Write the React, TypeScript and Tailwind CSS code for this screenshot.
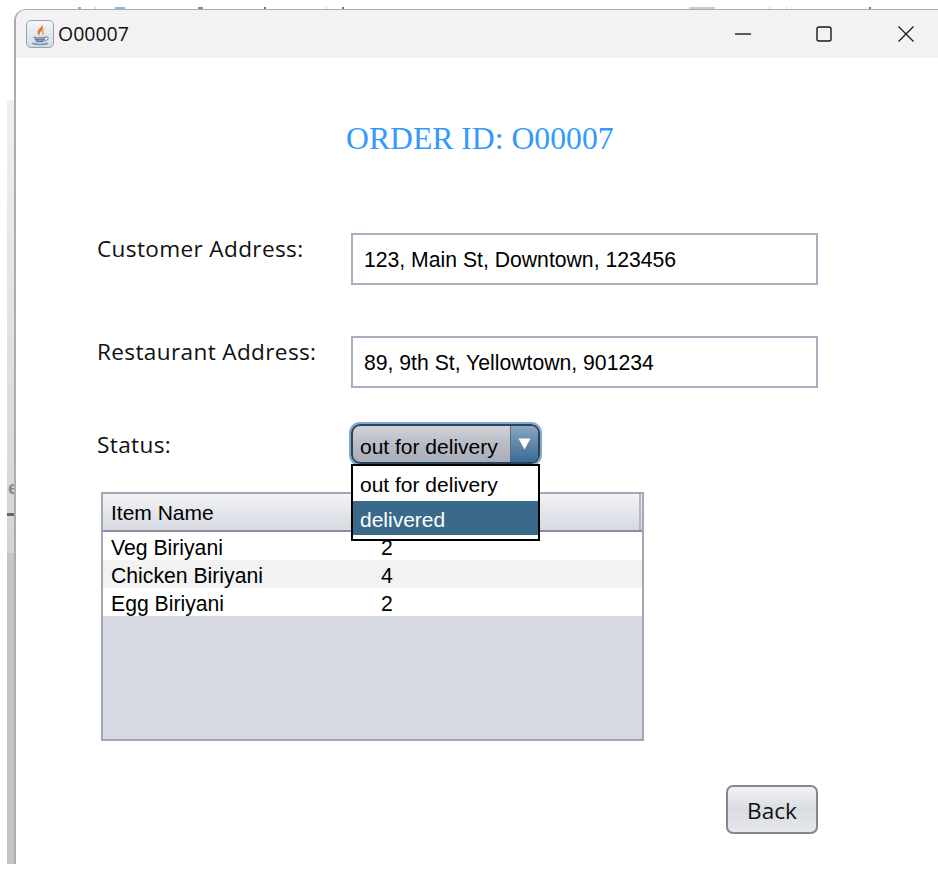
const sans = "font-['Liberation_Sans',Arial,sans-serif]";
const ui = "font-['Open_Sans','Noto_Sans',sans-serif]";

function JavaIcon() {
  return (
    <div className="w-[28px] h-[28px] rounded-[5px] border border-[#8fa6b8] bg-gradient-to-b from-[#f4f6f8] to-[#d3dbe2]">
      <svg width="26" height="26" viewBox="0 0 26 26" fill="none">
        <path d="M15 3c1 3-4.500 4.500-4.500 8.500 0 1.500 1 2.500 2 3.500-.6-2.200 .5-3.500 2-5 1.500-1.600 2-4 .5-7z" fill="#e8762d" />
        <path d="M18 7c-2.200 1.300-3.500 3-3 5 .2 1 1 1.600 .8 2.800 1.400-1 1-2.400 .7-3.300-.4-1.600 .4-3 1.500-4.500z" fill="#eb9a45" />
        <path d="M6.500 16c3.500 1 9 1 12.500 0M7.500 18c3 .7 7.500 .7 10.500 0M8.500 20c2.500 .6 6 .6 8.500 0" stroke="#5f7f9c" strokeWidth="1.300" />
        <path d="M18.500 16c3-.6 4 1.800 1 3.300l-2 .7" stroke="#5f7f9c" strokeWidth="1" />
        <path d="M5 22.300c4.500 1.600 12 1.600 16 0" stroke="#7d96ab" strokeWidth="1.500" />
      </svg>
    </div>
  );
}

function TitleBar() {
  return (
    <div className="h-[48px] bg-[#f3f1f3] flex items-center rounded-tl-[10px] shrink-0">
      <div className="ml-[10px]"><JavaIcon /></div>
      <span className={`ml-[4px] text-[19.500px] text-[#111] ${ui}`}>O00007</span>
      <div className="ml-auto flex items-center text-[#1a1a1a] pb-[1px]">
        <svg width="18" height="18" viewBox="0 0 18 18" className="mr-[63px]"><path d="M1 9h16" stroke="currentColor" strokeWidth="1.400" /></svg>
        <svg width="18" height="18" viewBox="0 0 18 18" className="mr-[64px]"><rect x="2" y="2" width="14" height="14" rx="2" fill="none" stroke="currentColor" strokeWidth="1.400" /></svg>
        <svg width="18" height="18" viewBox="0 0 18 18" className="mr-[23px]"><path d="M1.500 1.500l15 15M16.500 1.500l-15 15" stroke="currentColor" strokeWidth="1.300" /></svg>
      </div>
    </div>
  );
}

function Field({ label, value, className }: { label: string; value: string; className: string }) {
  return (
    <div className={`flex items-start ${className}`}>
      <span className={`w-[254px] text-[22.600px] leading-[32px] tracking-[0.35px] text-[#111] ${ui}`}>{label}</span>
      <div className={`w-[467px] h-[52px] border-2 border-[#a9adbd] flex items-center pl-[11px] pt-[2px] text-[21.200px] text-black ${sans}`}>{value}</div>
    </div>
  );
}

function Combo() {
  return (
    <div className="relative w-[189px] h-[40px] rounded-[9px] border-2 border-[#2c4257] shadow-[0_0_0_2px_#7fa9d2] bg-gradient-to-b from-[#d0d3d9] via-[#b9bcc5] to-[#a9adb8] flex items-center">
      <span className={`pl-[7px] pt-[5px] flex-1 text-[21px] text-black ${sans}`}>out for delivery</span>
      <div className="w-[28px] h-full rounded-r-[7px] bg-gradient-to-b from-[#8aa6c2] to-[#386a94] flex items-center justify-center border-l border-[#5b6a78]">
        <svg width="13" height="12" viewBox="0 0 13 12"><path d="M0.500 0.500h12L6.500 11.500z" fill="#fff" /></svg>
      </div>
      <div className={`absolute left-[-2px] top-[38px] w-[189px] h-[77px] border-2 border-black bg-white z-10 text-[21px] ${sans}`}>
        <div className="h-[35px] pl-[7px] pt-[3px] flex items-center text-black">out for delivery</div>
        <div className="h-[34px] pl-[7px] pt-[3px] flex items-center text-white bg-[#3a6a8a]">delivered</div>
      </div>
    </div>
  );
}

function Row({ name, qty, alt }: { name: string; qty: string; alt?: boolean }) {
  return (
    <div className={`h-[28px] flex items-center pt-[4px] text-[21.200px] text-black ${sans} ${alt ? 'bg-[#f2f2f2]' : 'bg-white'}`}>
      <span className="w-[278px] pl-[8px]">{name}</span>
      <span>{qty}</span>
    </div>
  );
}

function OrderTable() {
  return (
    <div className="ml-[85px] mt-[28px] w-[543px] h-[249px] border-2 border-[#a3a7b5] bg-[#d6d9e2] flex flex-col">
      <div className={`h-[38px] shrink-0 border-b-2 border-[#8c8f99] bg-gradient-to-b from-[#f2f3f5] to-[#d6d9e1] flex items-center pl-[8px] text-[21px] text-black ${sans}`}>
        <span className="flex-1 pt-[2px]">Item Name</span>
        <span className="w-[2px] h-full mr-[1px] bg-[#b4b7c0]" />
      </div>
      <Row name="Veg Biriyani" qty="2" />
      <Row name="Chicken Biriyani" qty="4" alt />
      <Row name="Egg Biriyani" qty="2" />
    </div>
  );
}

function SideStrip() {
  return (
    <div className="w-[7px] shrink-0 mt-[100px] h-[764px] flex flex-col overflow-hidden">
      <div className="h-[453px] bg-gradient-to-b from-[#f0f0f0] to-[#d4d4d4] overflow-hidden flex flex-col">
        <span className={`block mt-[377px] ml-[1px] text-[19px] leading-[22px] font-bold text-[#8a8a8a] ${sans}`}>e</span>
        <div className="mt-[14px] h-[3px] shrink-0 bg-[#666]" />
      </div>
      <div className="flex-1 bg-[#c6c6c6]" />
    </div>
  );
}

const marks = [
  { w: 'ml-[64px] w-[3px]', c: 'bg-[#8fb5dc]' },
  { w: 'ml-[14px] w-[1px]', c: 'bg-[#ccc]' },
  { w: 'ml-[19px] w-[10px]', c: 'bg-[#8fb5dc]' },
  { w: 'ml-[73px] w-[5px]', c: 'bg-[#888]' },
  { w: 'ml-[61px] w-[2px]', c: 'bg-[#777]' },
  { w: 'ml-[60px] w-[1px]', c: 'bg-[#ccc]' },
  { w: 'ml-[15px] w-[2px]', c: 'bg-[#777]' },
  { w: 'ml-[345px] w-[26px]', c: 'bg-[#ccc]' },
  { w: 'ml-[54px] w-[1px]', c: 'bg-[#ccc]' },
  { w: 'ml-[16px] w-[1px]', c: 'bg-[#ccc]' },
  { w: 'ml-[82px] w-[2px]', c: 'bg-[#777]' },
];

export default function App() {
  return (
    <div className="w-[938px] h-[891px] bg-white overflow-hidden flex pl-[7px]">
      <SideStrip />
      <div className="flex-1 flex flex-col pt-[7px]">
        <div className="h-[2px] flex shrink-0">
          {marks.map((m, i) => <span key={i} className={`h-[2px] ${m.w} ${m.c}`} />)}
        </div>
        <div className="h-[855px] border-l-2 border-t border-[#adadad] rounded-tl-[12px] bg-white flex flex-col">
          <TitleBar />
          <h1 className="ml-[330px] mt-[63px] text-[31.700px] leading-[36px] text-[#3399ff] font-['Liberation_Serif','Times_New_Roman',serif]">ORDER ID: O00007</h1>
          <Field className="ml-[81px] mt-[76px]" label="Customer Address:" value="123, Main St, Downtown, 123456" />
          <Field className="ml-[81px] mt-[51px]" label="Restaurant Address:" value="89, 9th St, Yellowtown, 901234" />
          <div className="ml-[81px] mt-[36px] flex items-center">
            <span className={`w-[254px] pt-[2px] text-[22.600px] tracking-[0.35px] text-[#111] ${ui}`}>Status:</span>
            <Combo />
          </div>
          <OrderTable />
          <button className={`ml-[710px] mt-[44px] w-[92px] h-[49px] pt-[3px] rounded-[7px] border-2 border-[#85878c] bg-gradient-to-b from-[#f2f3f5] via-[#d9dce2] to-[#e6e8ee] text-[22.600px] text-[#111] ${ui}`}>Back</button>
        </div>
      </div>
    </div>
  );
}
